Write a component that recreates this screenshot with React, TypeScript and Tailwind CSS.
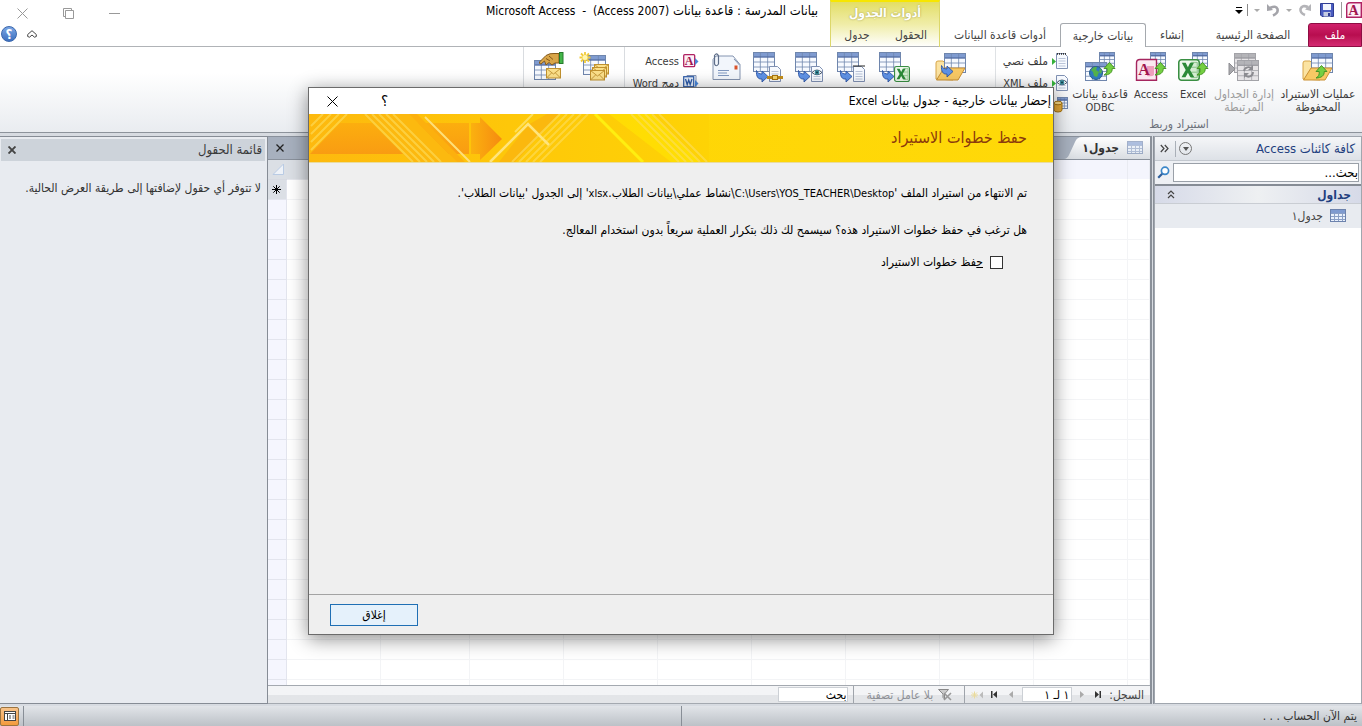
import type { ReactNode } from 'react';

type IconProps = { className?: string };

function Grid({ x = 0, y = 0, w = 22, h = 20, grey = false }: { x?: number; y?: number; w?: number; h?: number; grey?: boolean }) {
  const line = grey ? '#a3a3a8' : '#6f86ad';
  const head = grey ? '#b4b4b8' : '#7f9bd0';
  const body = grey ? '#e6e4e6' : '#f7faff';
  return (
    <g transform={`translate(${x} ${y})`}>
      <rect x=".5" y=".5" width={w - 1} height={h - 1} fill={body} stroke={line} />
      <rect x="1" y="1" width={w - 2} height={h * 0.22} fill={head} />
      <path
        d={`M1 ${h * 0.5}H${w - 1}M1 ${h * 0.75}H${w - 1}M${w / 3} 1V${h - 1}M${(w * 2) / 3} 1V${h - 1}`}
        stroke={line}
        strokeWidth=".8"
        fill="none"
      />
      <path d={`M1 ${h * 0.25}H${w - 1}`} stroke={grey ? '#929298' : '#4a6299'} />
    </g>
  );
}

function GreenUp({ x = 0, y = 0 }: { x?: number; y?: number }) {
  return (
    <path
      transform={`translate(${x} ${y})`}
      d="M6.500 .5L12 6.500H9.200C9.500 10.500 6.500 13 1 13C3.500 11.500 4.500 10 4.200 6.500H1Z"
      fill="#74cf42"
      stroke="#3f8f1f"
      strokeWidth=".9"
      strokeLinejoin="round"
    />
  );
}

function BlueOut({ x = 0, y = 0 }: { x?: number; y?: number }) {
  return (
    <path
      transform={`translate(${x} ${y})`}
      d="M.5 .5C1.500 3 3 4 6 4V1L12 6.500L6 12V9C2 9.500 0 6.500 .5 .5Z"
      fill="#5f92e6"
      stroke="#2c55a5"
      strokeWidth=".9"
      strokeLinejoin="round"
    />
  );
}

function Folder() {
  return (
    <>
      <path d="M1 28V12q0-2 2-2h5l2 2h8v17z" fill="#fbe3a2" stroke="#d7a548" />
      <Grid x={9} y={2} w={22} h={20} />
      <path d="M1.500 29L9 17H30L23 29Z" fill="#f8c964" stroke="#c98f33" strokeLinejoin="round" />
    </>
  );
}

function Svg({ children, className = 'h-8 w-8' }: { children: ReactNode; className?: string }) {
  return (
    <svg viewBox="0 0 32 32" className={className} aria-hidden="true">
      {children}
    </svg>
  );
}

const SavedImports = () => (
  <Svg>
    <Folder />
    <GreenUp x={13} y={14} />
  </Svg>
);

const SavedExports = () => (
  <Svg>
    <Folder />
    <BlueOut x={6} y={14} />
  </Svg>
);

const LinkedTables = () => (
  <Svg>
    <Grid x={6} y={2} w={22} h={20} grey />
    <Grid x={9} y={9} w={22} h={21} grey />
    <path d="M1 12L7 18L1 24Z" fill="#a9a9ad" stroke="#8d8d92" />
    <path d="M16 20a4.500 4.500 0 0 1 8-2M25 21a4.500 4.500 0 0 1-8 3" fill="none" stroke="#8b8b90" strokeWidth="1.800" />
    <path d="M25 14v5h-5zM16 27v-5h5z" fill="#8b8b90" />
  </Svg>
);

function ExcelTile({ x, y, s }: { x: number; y: number; s: number }) {
  return (
    <g transform={`translate(${x} ${y}) scale(${s / 20})`}>
      <rect x="0.700" y="0.700" width="18.600" height="18.600" rx="2.500" fill="#eef8ec" stroke="#3a8f43" strokeWidth="1.400" />
      <path d="M12 3h5.500v14H12" fill="#d3ecd0" stroke="#6fb36f" strokeWidth=".7" />
      <path d="M12 7.500h5M12 12h5" stroke="#6fb36f" strokeWidth=".7" />
      <path d="M3.500 3.500H7L9 7.500L11 3.500H14.500L11 10L14.800 16.500H11.200L9 12.500L6.800 16.500H3.200L7 10Z" fill="#2c8a38" />
    </g>
  );
}

const ExcelImport = () => (
  <Svg>
    <Grid x={15} y={1} w={16} h={15} />
    <ExcelTile x={1} y={8} s={22} />
    <GreenUp x={19} y={11} />
  </Svg>
);

const AccessImport = () => (
  <Svg>
    <Grid x={15} y={1} w={16} h={15} />
    <path d="M5 8.500H21.500V29.300H1.500V12Q1.500 8.500 5 8.500Z" fill="#fbe9f1" stroke="#a5265f" strokeWidth="1.400" />
    <path d="M12 15h7v9a5 2 0 0 1-7 1z" fill="#ef9fbd" />
    <text x="9" y="24" textAnchor="middle" fontFamily="Liberation Serif" fontWeight="700" fontSize="16" fill="#a0164f">
      A
    </text>
    <GreenUp x={19} y={11} />
  </Svg>
);

const OdbcImport = () => (
  <Svg>
    <Grid x={15} y={1} w={16} h={15} />
    <Grid x={1} y={11} w={22} h={19} />
    <circle cx="12" cy="22" r="6.500" fill="#2f79bd" stroke="#245a8c" />
    <path d="M7 19q3-4 6-3l-1 3 3 2-2 5-3-1-1-4zM16 17l2 3-1 3-2-2z" fill="#52b04b" />
    <GreenUp x={19} y={11} />
  </Svg>
);

const ExportExcel = () => (
  <Svg>
    <Grid x={1} y={1} />
    <BlueOut x={4} y={19} />
    <ExcelTile x={16} y={15} s={16} />
  </Svg>
);

function Page({ x, y, w = 12, h = 16 }: { x: number; y: number; w?: number; h?: number }) {
  return (
    <g transform={`translate(${x} ${y})`}>
      <path d={`M.5 .5H${w - 3.5}L${w - 0.5} 3.500V${h - 0.5}H.5Z`} fill="#f7faff" stroke="#8091b3" />
      <path d={`M2.500 5.500H${w - 2.5}M2.500 8H${w - 2.5}M2.500 10.500H${w - 2.5}M2.500 13H${w - 2.5}`} stroke="#a9b6cf" strokeWidth=".8" />
    </g>
  );
}

function Eye({ x, y }: { x: number; y: number }) {
  return (
    <g transform={`translate(${x} ${y})`}>
      <path d="M0 3.500Q5-1.500 10 3.500Q5 8 0 3.500Z" fill="#fff" stroke="#35475f" strokeWidth=".9" />
      <circle cx="5" cy="3.400" r="2.300" fill="#378c9b" />
      <circle cx="5" cy="3.400" r=".9" fill="#10303b" />
    </g>
  );
}

const ExportText = () => (
  <Svg>
    <Grid x={1} y={1} />
    <BlueOut x={4} y={19} />
    <Page x={17} y={15} />
    <path d="M17.500 15H29" stroke="#222" strokeWidth="2" strokeDasharray="1 1" />
  </Svg>
);

const ExportXml = () => (
  <Svg>
    <Grid x={1} y={1} />
    <BlueOut x={4} y={19} />
    <Page x={17} y={15} />
    <Eye x={18} y={18} />
  </Svg>
);

const ExportPdf = () => (
  <Svg>
    <Grid x={1} y={1} />
    <BlueOut x={4} y={19} />
    <Page x={17} y={15} />
    <path d="M15 26.500H31" stroke="#c38d1a" strokeWidth="3" />
    <rect x="20.500" y="24.500" width="5" height="4" fill="#f5d36a" stroke="#a87410" />
  </Svg>
);

const EmailIcon = () => (
  <Svg>
    <path d="M3 28.500V8.500L6 5H23L30 13.500V28.500Z" fill="#f2f6fc" stroke="#8494b0" />
    <path d="M24 8L29.500 14" stroke="#8494b0" fill="none" />
    <rect x="24.500" y="14.500" width="3" height="4" fill="#d9542c" />
    <path d="M8 19.500H19M8 22H17M8 24.500H19" stroke="#7f97bf" />
    <path d="M4.500 8V13q1.500 3.500 4 0V5q-1.500-4-4-.5V12" fill="none" stroke="#5d6d88" strokeWidth="1.200" />
  </Svg>
);

function Envelope({ x, y }: { x: number; y: number }) {
  return (
    <g transform={`translate(${x} ${y})`}>
      <rect x=".5" y=".5" width="14" height="9.500" fill="#fbe08b" stroke="#c0912f" />
      <path d="M.5 .5L7.500 6L14.500 .5M.5 10L5.500 5M14.500 10L9.500 5" fill="none" stroke="#c0912f" strokeWidth=".9" />
    </g>
  );
}

const CreateEmail = () => (
  <Svg>
    <Grid x={4} y={4} w={23} h={20} />
    <path d="M6 1V12M.5 6.500H11.500M2 2.500L10 10.500M10 2.500L2 10.500" stroke="#f1cb3a" strokeWidth="1.800" />
    <circle cx="6" cy="6.500" r="2.500" fill="#fff6b0" />
    <Envelope x={15} y={13} />
    <Envelope x={13} y={16} />
    <Envelope x={11} y={19} />
  </Svg>
);

const ManageReplies = () => (
  <Svg>
    <Grid x={1} y={9} w={22} h={20} />
    <path d="M6.500 11L13 4.500Q17 2 21 2.500H26V12H22L19 14L16 11.500L13 14L11.500 10L8 13Q6 13 6.500 11Z" fill="#d8a548" stroke="#84581a" />
    <path d="M13 7.500L17 10M16 5L20 8.500" stroke="#84581a" />
    <rect x="26.500" y="1.500" width="3.500" height="11" fill="#43b649" stroke="#267a2c" />
    <Envelope x={13} y={17} />
  </Svg>
);

function SmallSvg({ children }: { children: ReactNode }) {
  return (
    <svg viewBox="0 0 16 16" className="h-4 w-4 shrink-0" aria-hidden="true">
      {children}
    </svg>
  );
}

const TableSmall = ({ className = 'h-4 w-4' }: IconProps) => (
  <svg viewBox="0 0 16 16" className={`${className} shrink-0`} aria-hidden="true">
    <rect x=".5" y="1.500" width="15" height="12" fill="#eaf1fc" stroke="#6d83ad" />
    <rect x="1" y="2" width="14" height="3" fill="#7f9bd0" />
    <path d="M1 5.500H15M1 8.500H15M1 11.500H15M4.500 5V13M8.500 5V13M12.500 5V13" stroke="#8ba0c6" />
  </svg>
);

const AccessLogo = ({ className = 'h-4 w-4' }: IconProps) => (
  <svg viewBox="0 0 16 16" className={`${className} shrink-0`} aria-hidden="true">
    <path d="M4 .7H15.300V15.300H.7V4Q.7 .7 4 .7Z" fill="#fdeff5" stroke="#b02263" strokeWidth="1.400" />
    <text x="7.500" y="13" textAnchor="middle" fontFamily="Liberation Serif" fontWeight="700" fontSize="14" fill="#a0164f">
      A
    </text>
  </svg>
);

function BigButton({ icon, children, className, disabled = false }: { icon: ReactNode; children: ReactNode; className: string; disabled?: boolean }) {
  return (
    <button
      type="button"
      disabled={disabled}
      className={`flex flex-col items-center pt-1 ${disabled ? 'text-[#9b9b9b]' : 'text-[#3b3b3b]'} ${className}`}
    >
      {icon}
      <span className="mt-[5px] flex flex-col text-[12px] leading-[13px] whitespace-nowrap">{children}</span>
    </button>
  );
}

function SmallButton({ icon, children }: { icon: ReactNode; children: ReactNode }) {
  return (
    <button type="button" className="flex h-[22px] items-center gap-1 text-[12px] whitespace-nowrap text-[#3b3b3b]">
      {icon}
      <span>{children}</span>
    </button>
  );
}

const Latin = ({ children }: { children: ReactNode }) => <span className="text-[11px]">{children}</span>;

function IconButton({ icon, label }: { icon: ReactNode; label: string }) {
  return (
    <button type="button" aria-label={label} className="flex w-[42px] justify-center pt-1">
      {icon}
    </button>
  );
}

function QuickAccess() {
  return (
    <div className="flex h-[20px] items-center">
      <AccessLogo className="h-4 w-4" />
      <span className="mx-1 h-4 w-px bg-[#9a9a9a]" />
      <button type="button" aria-label="حفظ" className="mx-[2px]">
        <svg viewBox="0 0 16 16" className="h-4 w-4">
          <path d="M1.500 1.500H14.500V14.500H3L1.500 13Z" fill="#4a5cc0" stroke="#2f3c93" />
          <rect x="4" y="2" width="8" height="6" fill="#f2f5fd" />
          <rect x="4.500" y="10" width="7" height="4.500" fill="#c6cce2" />
          <rect x="9" y="11" width="2" height="3" fill="#2f3c93" />
        </svg>
      </button>
      <button type="button" aria-label="إعادة" className="ms-[5px]">
        <svg viewBox="0 0 14 14" className="h-[14px] w-[14px]">
          <path d="M7 12Q2 10 2.500 6Q4 1.500 10 4" fill="none" stroke="#b4b4b8" strokeWidth="2.600" />
          <path d="M13 1V8L7 6.500Z" fill="#b4b4b8" />
        </svg>
      </button>
      <span className="mx-[6px] h-0 w-0 border-x-[3px] border-t-[3px] border-x-transparent border-t-[#aaa]" />
      <button type="button" aria-label="تراجع">
        <svg viewBox="0 0 14 14" className="h-[14px] w-[14px]">
          <path d="M7 12.500Q12.500 10 11.500 6Q10 2 4 5" fill="none" stroke="#a4a4aa" strokeWidth="2.600" />
          <path d="M1 1V8L7 7Z" fill="#a4a4aa" />
        </svg>
      </button>
      <span className="mx-[6px] h-0 w-0 border-x-[3px] border-t-[3px] border-x-transparent border-t-[#aaa]" />
      <span className="h-3 w-px bg-[#8a8a8a]" />
      <button type="button" aria-label="تخصيص" className="ms-1 flex flex-col items-center gap-[2px]">
        <span className="h-px w-[6px] bg-black" />
        <span className="h-0 w-0 border-x-[4px] border-t-[4px] border-x-transparent border-t-black" />
      </button>
    </div>
  );
}

function Header() {
  return (
    <header className="flex h-[47px] shrink-0 bg-white text-[12px] text-[#444]">
      <div className="flex w-[422px] shrink-0 flex-col justify-between">
        <QuickAccess />
        <nav className="flex h-[24px] items-stretch whitespace-nowrap">
          <button type="button" className="w-[54px] rounded-tl-[3px] border border-[#8e0d43] bg-gradient-to-b from-[#d0206b] via-[#b80d4f] to-[#d42a72] text-white">
            ملف
          </button>
          <button type="button" className="w-[110px] border-b border-[#b0b3b7]">الصفحة الرئيسية</button>
          <button type="button" className="w-[52px] border-b border-[#b0b3b7]">إنشاء</button>
          <button type="button" className="w-[86px] rounded-t-[3px] border border-b-0 border-[#a5a9ae] bg-white">بيانات خارجية</button>
          <button type="button" className="grow border-b border-[#b0b3b7]">أدوات قاعدة البيانات</button>
        </nav>
      </div>
      <div className="flex w-[110px] shrink-0 flex-col border-x border-t-2 border-x-[#dcd76a] border-t-[#f7e600] bg-gradient-to-b from-[#e3de63] via-[#f0eda8] to-white">
        <div className="flex h-[21px] items-center justify-center text-[12px] font-bold text-white [text-shadow:0_0_2px_#9a9440]">أدوات الجدول</div>
        <nav className="flex grow border-b border-[#b0b3b7]">
          <button type="button" className="w-[56px]">الحقول</button>
          <button type="button" className="grow">جدول</button>
        </nav>
      </div>
      <div className="flex grow flex-col border-b border-[#b0b3b7]">
        <div className="flex h-[22px] items-center justify-between ps-3">
          <h1 className="text-[13px] text-black">
            بيانات المدرسة : قاعدة بيانات <span className="text-[12px]">(Access 2007)&nbsp; -&nbsp; Microsoft Access</span>
          </h1>
          <div className="flex items-center gap-[35px] pe-[17px] pt-1">
            <button type="button" aria-label="تصغير" className="flex h-[11px] w-[11px] items-center">
              <span className="h-px w-full bg-[#999]" />
            </button>
            <button type="button" aria-label="استعادة">
              <svg viewBox="0 0 11 11" className="h-[11px] w-[11px]" fill="none" stroke="#999">
                <path d="M2.500 2.500H10.500V10.500H2.500ZM.5 8.500V.5H8.500V2.500M.5 8.500H2.500" />
              </svg>
            </button>
            <button type="button" aria-label="إغلاق البرنامج">
              <svg viewBox="0 0 11 11" className="h-[11px] w-[11px]" fill="none" stroke="#999">
                <path d="M.5 .5L10.500 10.500M10.500 .5L.5 10.500" />
              </svg>
            </button>
          </div>
        </div>
        <div className="flex grow items-center justify-end gap-[10px] pe-px">
          <button type="button" aria-label="تصغير الشريط">
            <svg viewBox="0 0 10 8" className="h-2 w-[10px]" fill="#fff" stroke="#444">
              <path d="M5 .7L9.300 4.500V6.500L7.500 7.200L5 5L2.500 7.200L.7 6.500V4.500Z" />
            </svg>
          </button>
          <button type="button" aria-label="تعليمات" className="flex h-4 w-4 items-center justify-center rounded-full border border-[#3a67ad] bg-gradient-to-b from-[#7ba6e4] to-[#3d70bf] text-[13px] leading-none font-bold text-white">
            ؟
          </button>
        </div>
      </div>
    </header>
  );
}

const Arrow = () => <path d="M12 5L15.500 8.500L12 12Z" fill="#4a86d8" />;

function Ribbon() {
  return (
    <section className="flex h-[86px] shrink-0 border-b border-[#8d939b] bg-gradient-to-b from-white from-30% to-[#e9ecf0]">
      <div className="flex w-[367px] shrink-0 flex-col border-l border-[#dfe2e5]">
        <div className="flex grow">
          <BigButton className="w-[88px]" icon={<SavedImports />}>
            <span>عمليات الاستيراد</span>
            <span>المحفوظة</span>
          </BigButton>
          <BigButton className="w-[60px]" icon={<LinkedTables />} disabled>
            <span>إدارة الجداول</span>
            <span>المرتبطة</span>
          </BigButton>
          <BigButton className="w-[42px]" icon={<ExcelImport />}>
            <Latin>Excel</Latin>
          </BigButton>
          <BigButton className="w-[42px]" icon={<AccessImport />}>
            <Latin>Access</Latin>
          </BigButton>
          <BigButton className="w-[60px]" icon={<OdbcImport />}>
            <span>قاعدة بيانات</span>
            <Latin>ODBC</Latin>
          </BigButton>
          <div className="flex flex-col ps-[2px] pt-[3px]">
            <SmallButton
              icon={
                <SmallSvg>
                  <Page x={4} y={0} />
                  <path d="M5 .9H15" stroke="#333" strokeWidth="1.600" strokeDasharray="1 1" />
                  <path d="M0 5L4 8.500L0 12Z" fill="#35b13a" />
                </SmallSvg>
              }
            >
              ملف نصي
            </SmallButton>
            <SmallButton
              icon={
                <SmallSvg>
                  <Page x={4} y={0} />
                  <Eye x={5} y={4} />
                  <path d="M0 5L4 8.500L0 12Z" fill="#35b13a" />
                </SmallSvg>
              }
            >
              ملف <Latin>XML</Latin>
            </SmallButton>
            <button type="button" aria-label="المزيد" className="flex h-[22px] items-center">
              <SmallSvg>
                <Grid x={5} y={0} w={11} h={12} />
                <path d="M2 6V13a4 2 0 0 0 8 0V6Z" fill="#e5a936" stroke="#a87410" />
                <ellipse cx="6" cy="6" rx="4" ry="1.800" fill="#f8d984" stroke="#a87410" />
              </SmallSvg>
            </button>
          </div>
        </div>
        <div className="h-[14px] text-center text-[12px] leading-[13px] text-[#6b717a]">استيراد وربط</div>
      </div>
      <div className="flex w-[371px] shrink-0 border-l border-[#d9dce0]">
        <div className="flex w-[80px] justify-center ps-2 pt-1">
          <button type="button" aria-label="عمليات التصدير المحفوظة" className="self-start">
            <SavedExports />
          </button>
        </div>
        <IconButton icon={<ExportExcel />} label="تصدير Excel" />
        <IconButton icon={<ExportText />} label="تصدير ملف نصي" />
        <IconButton icon={<ExportXml />} label="تصدير XML" />
        <IconButton icon={<ExportPdf />} label="تصدير PDF" />
        <IconButton icon={<EmailIcon />} label="البريد الإلكتروني" />
        <div className="flex flex-col ps-[6px] pt-[3px]">
          <SmallButton
            icon={
              <SmallSvg>
                <rect x=".7" y="1.700" width="11" height="12" rx="1" fill="#fdeff5" stroke="#b02263" strokeWidth="1.300" />
                <text x="6.200" y="12" textAnchor="middle" fontFamily="Liberation Serif" fontWeight="700" fontSize="12" fill="#a0164f">
                  A
                </text>
                <Arrow />
              </SmallSvg>
            }
          >
            <Latin>Access</Latin>
          </SmallButton>
          <SmallButton
            icon={
              <SmallSvg>
                <path d="M4 .5H13V12H4Z" fill="#f5f8fd" stroke="#8091b3" />
                <rect x=".7" y="1.700" width="10" height="10" fill="#e6eefa" stroke="#2d5ba8" strokeWidth="1.200" />
                <path d="M2.500 4L4.200 9.500L5.700 5L7.200 9.500L9 4" fill="none" stroke="#2d5ba8" strokeWidth="1.300" />
                <Arrow />
              </SmallSvg>
            }
          >
            دمج <Latin>Word</Latin>
          </SmallButton>
        </div>
      </div>
      <div className="flex w-[101px] shrink-0 justify-center gap-[14px] border-l border-[#d9dce0] pt-1 ps-1">
        <button type="button" aria-label="إنشاء بريد إلكتروني" className="self-start">
          <CreateEmail />
        </button>
        <button type="button" aria-label="إدارة الردود" className="self-start">
          <ManageReplies />
        </button>
      </div>
    </section>
  );
}

function NavPane() {
  return (
    <aside className="flex w-[208px] shrink-0 flex-col border border-[#a0a6ae] bg-white">
      <div className="flex h-[24px] items-center border-b border-[#c3c8cf] bg-gradient-to-b from-[#f5f6f8] to-[#dde1e7]">
        <h2 className="grow ps-[6px] text-[13px] text-[#1f3f7f]">كافة كائنات Access</h2>
        <button type="button" aria-label="قائمة" className="flex h-[13px] w-[13px] items-center justify-center rounded-full border border-[#777]">
          <span className="h-0 w-0 border-x-[3px] border-t-[4px] border-x-transparent border-t-[#555]" />
        </button>
        <span className="ms-[3px] h-4 w-px bg-[#aab0b8]" />
        <button type="button" aria-label="طي" className="ms-[6px] me-[5px]">
          <svg viewBox="0 0 9 9" className="h-[9px] w-[9px]" fill="none" stroke="#444" strokeWidth="1.200">
            <path d="M.8 1L4 4.500L.8 8M4.800 1L8 4.500L4.800 8" />
          </svg>
        </button>
      </div>
      <div className="flex h-[25px] items-center gap-[3px] border-b-2 border-[#868c95] bg-[#eef0f4] px-[2px]">
        <input aria-label="بحث" defaultValue="بحث..." className="h-[19px] min-w-0 grow border border-[#9aa0a8] bg-white px-0 text-[13px] text-black outline-none" />
        <svg viewBox="0 0 13 13" className="h-[13px] w-[13px]" fill="none">
          <circle cx="8" cy="4.800" r="3.600" stroke="#3b86c8" strokeWidth="1.700" fill="#fff" />
          <path d="M5.200 7.800L1.200 11.800" stroke="#2f5f9c" strokeWidth="2.200" />
        </svg>
      </div>
      <div className="flex h-[18px] items-center justify-between border-b border-[#c9cdd3] bg-gradient-to-r from-[#d6dae8] via-[#eef0f2] to-[#d6dae8] ps-[10px] pe-[12px]">
        <h3 className="text-[12px] font-bold text-[#1f3f7f]">جداول</h3>
        <svg viewBox="0 0 8 9" className="h-[9px] w-2" fill="none" stroke="#444" strokeWidth="1.200">
          <path d="M1 4L4 1L7 4M1 8L4 5L7 8" />
        </svg>
      </div>
      <a href="#table1" className="flex h-[24px] items-center gap-[7px] bg-[#e8ebf0] ps-[15px] text-[12px] text-[#444]">
        <TableSmall />
        <span>جدول١</span>
      </a>
    </aside>
  );
}

const rows = Array.from({ length: 26 }, (_, i) => i);
const columns = Array.from({ length: 10 }, (_, i) => i);

function Sheet() {
  return (
    <div className="min-h-0 grow overflow-hidden bg-white">
      <table dir="ltr" className="w-full table-fixed border-collapse">
        <colgroup>
          <col className="w-[18px]" />
          <col className="w-[94px]" />
          <col className="w-[89px]" />
          <col className="w-[94px]" />
          <col className="w-[94px]" />
          <col className="w-[94px]" />
          <col className="w-[94px]" />
          <col className="w-[94px]" />
          <col className="w-[94px]" />
          <col className="w-[94px]" />
          <col />
        </colgroup>
        <thead>
          <tr className="h-[19px]">
            <th className="border-b border-[#d7dae2] bg-[#dbdfe5] p-0 align-bottom">
              <svg viewBox="0 0 12 12" className="ms-1 mb-1 h-3 w-3">
                <path d="M11.500 1V11.500H1Z" fill="#eef2f8" stroke="#b9cbe4" />
              </svg>
            </th>
            {columns.map((c) => (
              <th key={c} className={c < 1 ? 'border-b border-[#e6e8ee] bg-[#dbdfe5]' : 'border-r border-[#e9ebf2] bg-[#f4f5fd]'} />
            ))}
          </tr>
        </thead>
        <tbody>
          {rows.map((r) => (
            <tr key={r} className="h-[20px]">
              <th className={`border-r border-b border-[#e3e5ee] p-0 ${r === 0 ? 'bg-[#dbdfe5]' : 'bg-[#f5f6fe]'}`}>
                {r === 0 && (
                  <svg viewBox="0 0 9 9" className="mx-auto h-[9px] w-[9px]" stroke="#000">
                    <path d="M4.500 0V9M0 4.500H9M1.300 1.300L7.700 7.700M7.700 1.300L1.300 7.700" />
                  </svg>
                )}
              </th>
              {columns.map((c) => (
                <td key={c} className="border-r border-b border-[#f3f4f6]" />
              ))}
            </tr>
          ))}
        </tbody>
      </table>
    </div>
  );
}

function RecordNav() {
  return (
    <div className="flex h-[19px] shrink-0 items-center border-t border-b border-[#a4a9b0] bg-gradient-to-b from-[#f3f4f6] from-50% to-[#e3e5e8] to-50% text-[12px] text-[#444]">
      <span className="ps-[6px]">السجل:</span>
      <button type="button" aria-label="الأول" className="ms-[8px]">
        <svg viewBox="0 0 6 7" className="h-[7px] w-[6px]">
          <path d="M0 0L4 3.500L0 7ZM4.500 0H6V7H4.500Z" fill="#333" />
        </svg>
      </button>
      <button type="button" aria-label="السابق" className="ms-[11px]">
        <svg viewBox="0 0 4 7" className="h-[7px] w-1">
          <path d="M0 0L4 3.500L0 7Z" fill="#aaa" />
        </svg>
      </button>
      <input aria-label="السجل الحالي" defaultValue="١ لـ ١" className="ms-[8px] h-[15px] w-[50px] border border-[#ccd0d5] bg-white px-[2px] text-[12px] text-black outline-none" />
      <button type="button" aria-label="التالي" className="ms-[9px]">
        <svg viewBox="0 0 4 7" className="h-[7px] w-1">
          <path d="M4 0L0 3.500L4 7Z" fill="#aaa" />
        </svg>
      </button>
      <button type="button" aria-label="الأخير" className="ms-[12px]">
        <svg viewBox="0 0 6 7" className="h-[7px] w-[6px]">
          <path d="M6 0L2 3.500L6 7ZM0 0H1.500V7H0Z" fill="#333" />
        </svg>
      </button>
      <button type="button" aria-label="سجل جديد" className="ms-[8px] me-[6px]">
        <svg viewBox="0 0 12 8" className="h-2 w-3">
          <path d="M12 .5L8.500 4L12 7.500Z" fill="#bbb" />
          <path d="M0 4H7M3.500 .5V7.500M1 1.500L6 6.500M6 1.500L1 6.500" stroke="#eadb9c" />
        </svg>
      </button>
      <span className="h-full w-px bg-[#9fa4ab]" />
      <button type="button" disabled className="mx-[12px] flex items-center gap-[5px] whitespace-nowrap text-[#8d9096]">
        <svg viewBox="0 0 14 12" className="h-3 w-[14px]">
          <path d="M.5 .5H10.500L6.500 5V10L5 8.500V5Z" fill="#ccc" stroke="#888" />
          <path d="M6 4L13 11M13 4L6 11" stroke="#999" strokeWidth="1.600" />
        </svg>
        بلا عامل تصفية
      </button>
      <span className="h-full w-px bg-[#9fa4ab]" />
      <input aria-label="بحث في السجلات" defaultValue="بحث" className="ms-[5px] h-[15px] w-[70px] border border-[#ccd0d5] bg-white px-[1px] text-[12px] text-black outline-none" />
    </div>
  );
}

function Dialog() {
  return (
    <div
      role="dialog"
      aria-label="إحضار بيانات خارجية"
      className="absolute inset-x-0 top-[87px] mx-auto flex h-[548px] w-[746px] flex-col border border-[#6b6b6b] bg-[#efefef] shadow-[0_4px_18px_rgba(0,0,0,0.45)]"
    >
      <div className="flex h-[26px] shrink-0 items-center bg-white ps-[2px] pe-[18px] text-black">
        <h2 className="grow text-[13px]">
          إحضار بيانات خارجية - جدول بيانات <span className="text-[12px]">Excel</span>
        </h2>
        <button type="button" aria-label="تعليمات" className="text-[15px]">؟</button>
        <button type="button" aria-label="إغلاق النافذة" className="ms-[43px]">
          <svg viewBox="0 0 11 11" className="h-[11px] w-[11px]" fill="none" stroke="#000">
            <path d="M.5 .5L10.500 10.500M10.500 .5L.5 10.500" />
          </svg>
        </button>
      </div>
      <div className="flex h-[49px] shrink-0 justify-between border-b border-[#e9dca0] bg-gradient-to-l from-[#ffd908] to-[#fed305]">
        <h3 className="self-center ps-[26px] text-[16px] text-[#8b3a0c]">حفظ خطوات الاستيراد</h3>
        <svg viewBox="0 0 400 48" className="h-12 w-[400px]" aria-hidden="true">
          <defs>
            <linearGradient id="arrowHead" x1="0" x2="1">
              <stop offset="0" stopColor="#fbb10f" />
              <stop offset="1" stopColor="#f68a10" />
            </linearGradient>
            <linearGradient id="base" x1="0" x2="1">
              <stop offset="0" stopColor="#fdb90e" />
              <stop offset=".5" stopColor="#fec709" />
              <stop offset="1" stopColor="#fed305" />
            </linearGradient>
            <linearGradient id="body" x1="0" x2="0" y1="0" y2="1">
              <stop offset="0" stopColor="#fcae0e" />
              <stop offset="1" stopColor="#f99c12" />
            </linearGradient>
          </defs>
          <rect width="400" height="48" fill="url(#base)" />
          <path d="M31 9H160V40H1Z" fill="url(#body)" />
          <path d="M162 9H171V3L193 25L171 46V40H162Z" fill="url(#arrowHead)" />
          <path d="M54 0H100L148 48H102Z" fill="#fcb90f" />
          <path d="M100 0H108L156 48H148Z" fill="#fcb00e" />
          <path d="M181 48L219 10L224 0H252L204 48Z" fill="#fdc70a" />
          <path d="M219 11L238 0H250L206 48H190Z" fill="#fbb80e" />
          <path d="M300 0H342L390 48H362Z" fill="#ffe203" opacity=".7" />
          <g stroke="#fddf60" strokeWidth="2" opacity=".6">
            <path d="M2 12L14 0M2 20L22 0M2 28L30 0M2 36L38 0" />
            <path d="M56 0L104 48M63 0L111 48M70 0L118 48M77 0L125 48M84 0L132 48" />
            <path d="M203 48L251 0M210 48L258 0M217 48L265 0M224 48L272 0M231 48L279 0" />
            <path d="M322 0L370 48M329 0L377 48M336 0L384 48M343 0L391 48M350 0L398 48" />
          </g>
          <path d="M116 3L161 48" stroke="#fee07a" strokeWidth="2" />
          <path d="M181 48L219 10L240 31" fill="none" stroke="#ffe47c" strokeWidth="2.500" />
          <path d="M206 18L224 0" stroke="#fede58" strokeWidth="2" />
          <path d="M286 0L334 48" stroke="#ffee10" strokeWidth="3" />
        </svg>
      </div>
      <div className="flex grow flex-col px-[26px] pt-[22px] text-[12px] leading-[16px] text-black">
        <p className="whitespace-nowrap">
          تم الانتهاء من استيراد الملف '<Latin>C:\Users\YOS_TEACHER\Desktop</Latin>\نشاط عملي\بيانات الطلاب.<Latin>xlsx</Latin>' إلى الجدول 'بيانات الطلاب'.
        </p>
        <p className="mt-[20px] whitespace-nowrap">هل ترغب في حفظ خطوات الاستيراد هذه؟ سيسمح لك ذلك بتكرار العملية سريعاً بدون استخدام المعالج.</p>
        <label className="mt-4 flex items-center gap-[7px] self-start ps-6">
          <input type="checkbox" className="h-[13px] w-[13px] appearance-none border border-[#333] bg-white" />
          <span>
            <u>ح</u>فظ خطوات الاستيراد
          </span>
        </label>
      </div>
      <div className="flex h-[40px] shrink-0 items-center justify-end border-t border-[#a3a3a3] pe-[21px]">
        <button type="button" className="h-[22px] w-[88px] border border-[#1f6fb4] bg-[#e5f1fb] text-[12px] text-black">
          <u>إ</u>غلاق
        </button>
      </div>
    </div>
  );
}

export default function App() {
  return (
    <div
      dir="rtl"
      className="relative flex h-screen flex-col overflow-hidden bg-[#d7dbe1] [font-family:'DejaVu_Sans_Condensed','DejaVu_Sans',sans-serif]"
    >
      <Header />
      <Ribbon />
      <main className="mt-[3px] flex min-h-0 grow">
        <NavPane />
        <div className="w-1 shrink-0 border-r border-l-2 border-[#8a9099] bg-[#d7dbe1]" />
        <section className="flex min-w-0 grow flex-col">
          <div className="flex h-[24px] shrink-0 items-stretch justify-between border-t border-b border-[#8a919c] bg-[#a7b0be]">
            <div className="flex">
              <div className="flex items-center gap-2 bg-gradient-to-b from-white to-[#d9dde2] ps-[7px] text-[12px] font-bold text-[#333]">
                <TableSmall className="h-4 w-4 opacity-60" />
                <span className="whitespace-nowrap">جدول١</span>
              </div>
              <svg viewBox="0 0 18 22" className="h-[22px] w-[18px]" preserveAspectRatio="none">
                <defs>
                  <linearGradient id="tabEdge" x1="0" x2="0" y1="0" y2="1">
                    <stop offset="0" stopColor="#fff" />
                    <stop offset="1" stopColor="#d9dde2" />
                  </linearGradient>
                </defs>
                <path d="M18 0Q13 0 11 5L5 18Q3 22 0 22H18Z" fill="url(#tabEdge)" />
              </svg>
            </div>
            <button type="button" aria-label="إغلاق الجدول" className="me-[8px]">
              <svg viewBox="0 0 8 8" className="h-2 w-2" stroke="#222" strokeWidth="1.300">
                <path d="M.5 .5L7.500 7.500M7.500 .5L.5 7.500" />
              </svg>
            </button>
          </div>
          <Sheet />
          <RecordNav />
        </section>
        <aside className="flex w-[268px] shrink-0 flex-col border-t border-r border-b border-[#868c95] bg-[#e8ebf0] pt-[2px]">
          <div className="mr-[2px] ml-px flex h-[22px] items-center justify-between bg-[#cdd3da] ps-[3px] pe-[7px] text-[#3a3a3a]">
            <h2 className="text-[13px]">قائمة الحقول</h2>
            <button type="button" aria-label="إغلاق القائمة">
              <svg viewBox="0 0 8 8" className="h-2 w-2" stroke="#444" strokeWidth="1.900">
                <path d="M.5 .5L7.500 7.500M7.500 .5L.5 7.500" />
              </svg>
            </button>
          </div>
          <p className="mt-[19px] ps-[6px] text-[12px] leading-[16px] whitespace-nowrap text-[#333]">لا تتوفر أي حقول لإضافتها إلى طريقة العرض الحالية.</p>
        </aside>
      </main>
      <footer className="mt-[2px] flex h-[20px] shrink-0 items-center bg-gradient-to-b from-[#e2e5e9] to-[#bcc1c7] text-[12px] text-[#333]">
        <span className="w-1/2 border-l border-[#888e96] ps-[5px] leading-[20px]">يتم الآن الحساب . . .</span>
        <span className="grow" />
        <span className="h-full w-px bg-[#888e96]" />
        <button type="button" aria-label="طريقة عرض ورقة البيانات" className="ms-[4px] flex h-[19px] w-[19px] items-center justify-center rounded-[2px] border border-[#9c7440] bg-gradient-to-b from-[#f7c389] to-[#f39a3a]">
          <svg viewBox="0 0 12 10" className="h-[10px] w-3">
            <rect x=".5" y=".5" width="11" height="9" fill="#fff" stroke="#444" />
            <path d="M1 2.500H11M3.500 2V9M5 5H7M8.500 5H10.500M5 7H7M8.500 7H10.500" stroke="#444" />
          </svg>
        </button>
      </footer>
      <Dialog />
    </div>
  );
}
